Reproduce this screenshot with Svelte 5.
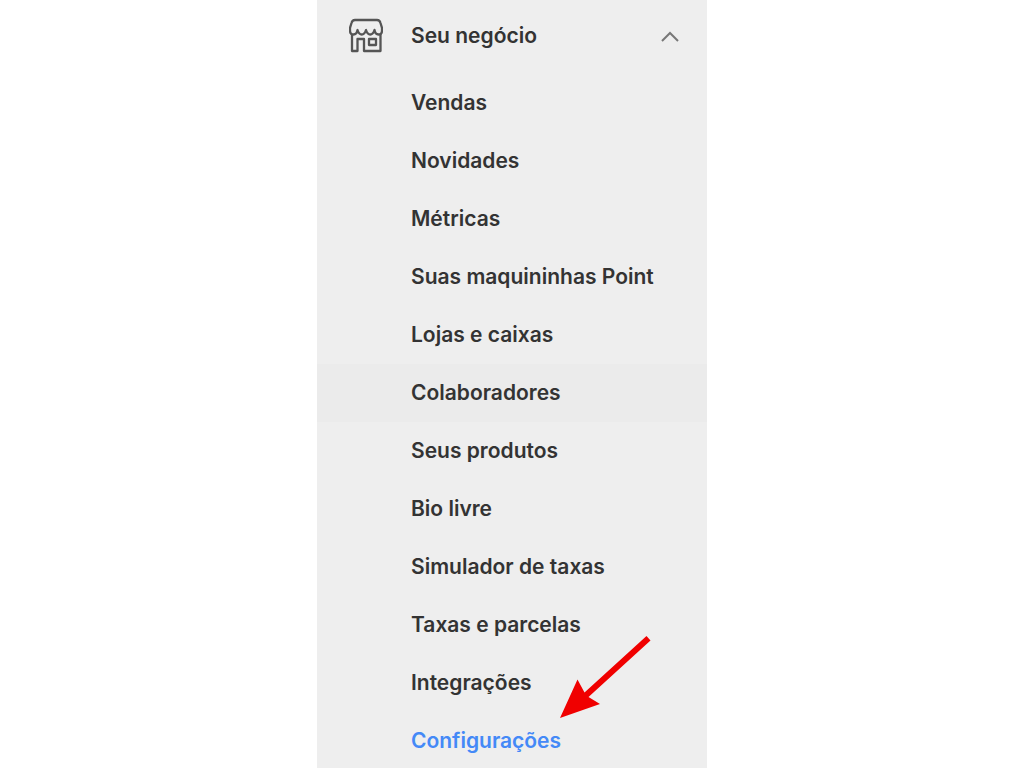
<script lang="ts">
  type Item = { label: string; hovered?: boolean; active?: boolean };

  let open = $state(true);

  const items: Item[] = [
    { label: 'Vendas' },
    { label: 'Novidades' },
    { label: 'Métricas' },
    { label: 'Suas maquininhas Point' },
    { label: 'Lojas e caixas' },
    { label: 'Colaboradores', hovered: true },
    { label: 'Seus produtos' },
    { label: 'Bio livre' },
    { label: 'Simulador de taxas' },
    { label: 'Taxas e parcelas' },
    { label: 'Integrações' },
    { label: 'Configurações', active: true },
  ];
</script>

<nav class="menu" aria-label="Seu negócio">
  <button type="button" class="toggle" aria-expanded={open} onclick={() => (open = !open)}>
    <svg class="store" viewBox="0 0 34 34" aria-hidden="true">
      <path d="M6 1.5H28C30 1.5 31 2.5 31.5 4.5L33 9.5V12C33 14.5 31.5 16 29.5 16C27.5 16 26 14.5 25.5 11.5C24.5 14.5 23 16 21.2 16C19.4 16 18 14.5 17 11.5C16 14.5 14.6 16 12.8 16C11 16 9.5 14.5 8.5 11.5C8 14.5 6.5 16 4.5 16C2.5 16 1 14.5 1 12V9.5L2.5 4.5C3 2.5 4 1.5 6 1.5Z" />
      <path d="M3 15.5V32.5H8.5V20.5H15V32.5H31.5V15.5" />
      <path d="M20 20.5H27V26.5H20Z" />
    </svg>
    <span class="title">Seu negócio</span>
    <svg class="chevron" class:closed={!open} viewBox="0 0 20 12" aria-hidden="true">
      <path d="M2 11L10 3L18 11" />
    </svg>
  </button>

  {#if open}
    <ul class="items">
      {#each items as item}
        <li>
          <a
            href="#top"
            class="item"
            class:hovered={item.hovered}
            class:active={item.active}
            aria-current={item.active ? 'page' : undefined}
          >
            {item.label}
          </a>
          {#if item.active}
            <svg class="pointer" viewBox="0 0 90 84" aria-hidden="true">
              <path d="M86.5 0L90.5 4.5L28.5 61L40 68L0 82L17.5 43.5L24.5 56.5Z" />
            </svg>
          {/if}
        </li>
      {/each}
    </ul>
  {/if}
</nav>

<style>
  :global(body) {
    background: #fff;
    font-family: Inter, 'Open Sans', sans-serif;
  }

  .menu {
    max-width: 390px;
    margin: 0 auto;
    background: #eee;
    color: #333;
  }

  .toggle {
    display: flex;
    align-items: center;
    width: 100%;
    padding: 17px 27px 20px 32px;
    border: 0;
    background: none;
    color: inherit;
    font: inherit;
    text-align: left;
    cursor: pointer;
  }

  .store {
    width: 34px;
    height: 35px;
    margin-right: 28px;
    fill: none;
    stroke: #555;
    stroke-width: 2.3;
    stroke-linejoin: round;
  }

  .title {
    flex: 1;
    font-size: 21px;
    font-weight: 600;
    line-height: 37px;
  }

  .chevron {
    width: 20px;
    height: 12px;
    fill: none;
    stroke: #777;
    stroke-width: 2;
  }

  .chevron.closed {
    transform: rotate(180deg);
  }

  .items {
    margin: 0;
    padding: 0;
    list-style: none;
  }

  .items li {
    position: relative;
  }

  .item {
    display: block;
    padding-left: 94px;
    color: inherit;
    font-size: 21px;
    font-weight: 600;
    line-height: 58px;
    text-decoration: none;
  }

  .item.hovered,
  .item:hover {
    background: #ebebeb;
  }

  .item.active {
    color: #4489f7;
  }

  /* Sits over the rows and points down at the active link */
  .pointer {
    position: absolute;
    right: 57px;
    bottom: 50px;
    width: 90px;
    height: 84px;
    overflow: visible;
    fill: #f00000;
    pointer-events: none;
  }
</style>
